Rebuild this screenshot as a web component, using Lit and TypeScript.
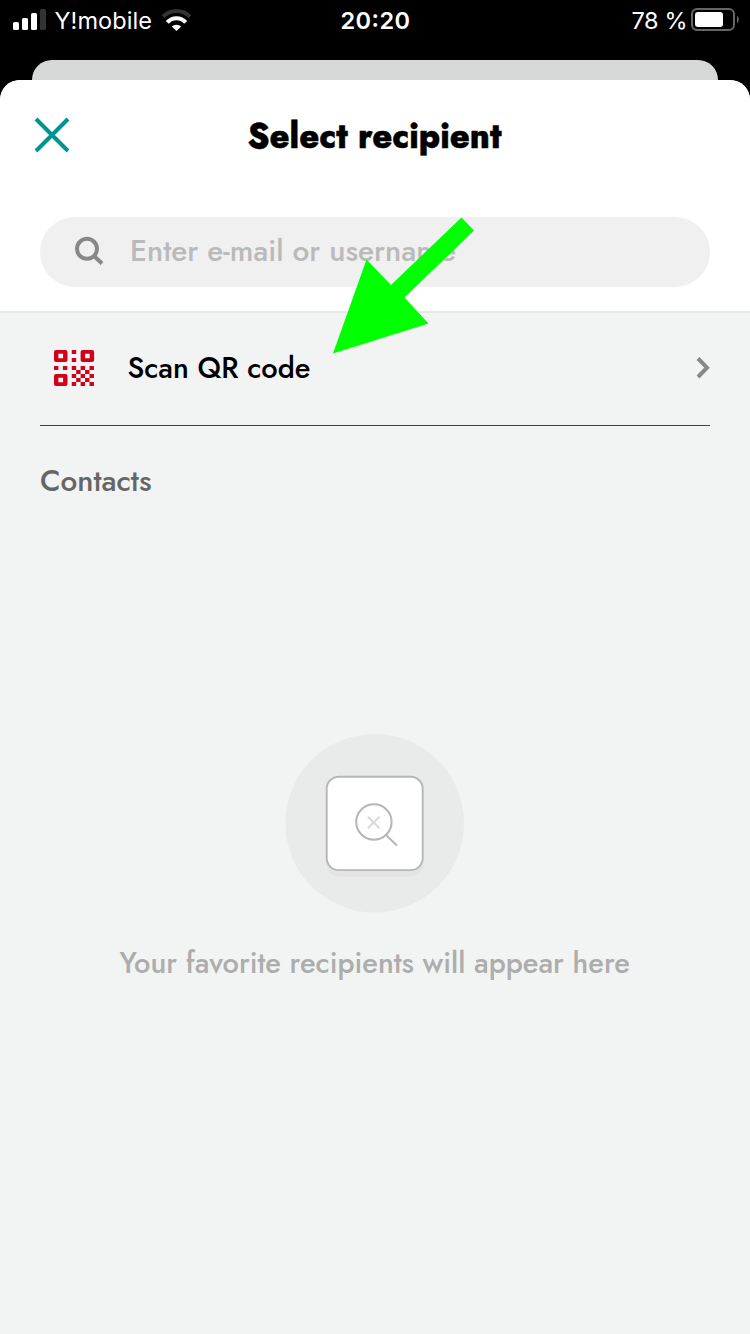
import { LitElement, html, css, svg } from "lit";
import { customElement } from "lit/decorators.js";

@customElement("status-bar")
class StatusBar extends LitElement {
  static styles = css`
    :host { display: flex; height: 60px; box-sizing: border-box; padding: 0 11px 0 13px; }
    .side { flex: 1 1 0; display: flex; height: 40px; align-items: center; }
    .right { justify-content: flex-end; }
    .carrier { margin-left: 8px; }
    .wifi { margin-left: 9px; }
    svg { display: block; flex: none; overflow: visible; }
    text { font: 23.5px Inter, sans-serif; fill: #fff; }
    .bold { font-weight: 600; }
  `;
  render() {
    return html`
      <div class="side">
        <svg width="33" height="40" fill="#fff">
          <rect x="0" y="22" width="6" height="8" rx="1.5"/><rect x="9" y="18" width="6" height="12" rx="1.5"/>
          <rect x="18" y="13" width="6" height="17" rx="1.5"/><rect x="27" y="9" width="6" height="21" rx="1.5" fill="#333"/>
        </svg>
        <svg class="carrier" width="98" height="40"><text x="0.5" y="29" textLength="97.5">Y!mobile</text></svg>
        <svg class="wifi" width="30" height="40" fill="none">
          <path d="M2.2 16.6A18.6 18.6 0 0 1 28.8 16.6" stroke="#333" stroke-width="4.2"/>
          <path d="M6.3 22.4A12.4 12.4 0 0 1 24.7 22.4" stroke="#fff" stroke-width="4"/>
          <path d="M15.5 31L10.8 26.6A6.8 6.8 0 0 1 20.2 26.6Z" fill="#fff"/>
        </svg>
      </div>
      <svg width="70" height="40"><text class="bold" x="-0.5" y="29" textLength="69.5">20:20</text></svg>
      <div class="side right">
        <svg width="60" height="40"><text x="0.5" y="29" textLength="56">78 %</text></svg>
        <svg width="48" height="40">
          <rect x="1" y="9" width="42" height="21" rx="5" fill="none" stroke="#666" stroke-width="2"/>
          <rect x="4" y="12" width="28" height="15" rx="3" fill="#fff"/>
          <path d="M46 15.5Q49.5 19.5 46 23.5Z" fill="#666"/>
        </svg>
      </div>`;
  }
}

@customElement("app-root")
class AppRoot extends LitElement {
  static styles = css`
    :host { display: flex; flex-direction: column; position: relative; height: 1334px; width: 750px; background: #000; overflow: hidden; }
    .behind { height: 20px; margin: 0 32px; background: #d6d8d7; border-radius: 20px 20px 0 0; flex: none; }
    .sheet { flex: 1; display: flex; flex-direction: column; background: #f2f4f3; border-radius: 20px 20px 0 0; overflow: hidden; }
    .top { height: 231px; background: #fff; border-bottom: 2px solid #e6e8e7; flex: none; }
    .titlebar { height: 110px; display: flex; align-items: center; padding: 0 32px; }
    .grow { flex: 1; }
    svg { display: block; flex: none; overflow: visible; }
    text { font-family: Jost, Futura, Lato, sans-serif; font-size: 30px; font-weight: 500; }
    .title { font-size: 36px; font-weight: 800; fill: #000; stroke: #000; stroke-width: 0.4px; }
    .search { margin: 27px 40px 0; height: 70px; border-radius: 35px; background: #f0f0f0; display: flex; align-items: center; padding-left: 34px; }
    .field { margin-left: 22px; }
    .placeholder { fill: #bababb; }
    .scan { height: 112px; margin: 0 40px; display: flex; border-bottom: 1px solid #d0021b; flex: none; padding-left: 14px; }
    .label { margin-left: 30px; }
    .scanlabel { fill: #000; }
    .contacts { fill: #666; }
    .hint { fill: #adadad; }
    .section { margin: 34px 40px 0; }
    .empty { display: flex; flex-direction: column; align-items: center; margin-top: 230px; }
    .arrow { position: absolute; left: 332px; top: 216px; }
  `;
  finder(x: number, y: number) {
    return svg`<path fill-rule="evenodd" d="M${x + 2} ${y}h9.5q2 0 2 2v8q0 2-2 2h-9.5q-2 0-2-2v-8q0-2 2-2zM${x + 4.4} ${y + 3.8}v4.4h4.7v-4.4z"/>`;
  }
  render() {
    const cells: Array<[number, number]> = [
      [4, 0], [4, 2], [0, 4], [2, 4], [4, 4], [6, 4], [8, 4],
      [5, 5], [7, 5], [4, 6], [6, 6], [8, 6], [5, 7], [7, 7], [4, 8], [6, 8], [8, 8],
    ];
    return html`
      <status-bar></status-bar>
      <div class="behind"></div>
      <div class="sheet">
        <div class="top">
          <div class="titlebar">
            <svg width="40" height="40"><path d="M4 4L36 36M36 4L4 36" stroke="#009490" stroke-width="4"/></svg>
            <div class="grow"></div>
            <svg width="260" height="60"><text class="title" x="2.5" y="42.5" textLength="254" lengthAdjust="spacingAndGlyphs">Select recipient</text></svg>
            <div class="grow"></div>
            <svg width="40" height="40"></svg>
          </div>
          <div class="search">
            <svg width="32" height="32" fill="none" stroke="#888" stroke-width="4"><circle cx="13" cy="12.8" r="10"/><path d="M20 20L28 27.5"/></svg>
            <svg class="field" width="340" height="50"><text class="placeholder" x="2" y="34" textLength="326" lengthAdjust="spacingAndGlyphs">Enter e-mail or username</text></svg>
          </div>
        </div>
        <div class="scan">
          <svg width="42" height="112" fill="#d0021b"><g transform="translate(0 37)">
            ${this.finder(0, 0)}${this.finder(26.6, 0)}${this.finder(0, 24)}
            ${cells.map(([c, r]) => svg`<rect x=${c * 4.44} y=${r * 4} width="4.4" height="4"/>`)}
          </g></svg>
          <svg class="label" width="200" height="112"><text class="scanlabel" x="1.5" y="65" textLength="183" lengthAdjust="spacingAndGlyphs">Scan QR code</text></svg>
          <div class="grow"></div>
          <svg width="16" height="112"><path d="M4 45.5L13 54.7L4 64" fill="none" stroke="#888" stroke-width="4"/></svg>
        </div>
        <div class="section"><svg width="140" height="44"><text class="contacts" x="0" y="31" textLength="111.5" lengthAdjust="spacingAndGlyphs">Contacts</text></svg></div>
        <div class="empty">
          <svg width="180" height="180" fill="none" stroke-linecap="round">
            <circle cx="89.7" cy="89.3" r="89.3" fill="#e9ebea"/>
            <rect x="41.2" y="50" width="97" height="92.7" rx="13" fill="#e3e5e4"/>
            <rect x="41.7" y="42.7" width="96" height="93.4" rx="12" fill="#fff" stroke="#b6b6b6" stroke-width="1.9"/>
            <circle cx="88.9" cy="88" r="17.7" stroke="#b6b6b6" stroke-width="2"/>
            <path d="M101.3 101.3L111.4 111" stroke="#b6b6b6" stroke-width="2"/>
            <path d="M83.4 83.2L94 93.8M94 83.2L83.4 93.8" stroke="#dadada" stroke-width="2"/>
          </svg>
          <svg width="540" height="80"><text class="hint" x="14.5" y="59" textLength="510.5" lengthAdjust="spacingAndGlyphs">Your favorite recipients will appear here</text></svg>
        </div>
      </div>
      <svg class="arrow" width="144" height="140"><path d="M129.5 1.5L142 14.5L72.5 81.5L96.5 107.5L1 137.5L34.5 43.5L59 69Z" fill="#0f0"/></svg>`;
  }
}
